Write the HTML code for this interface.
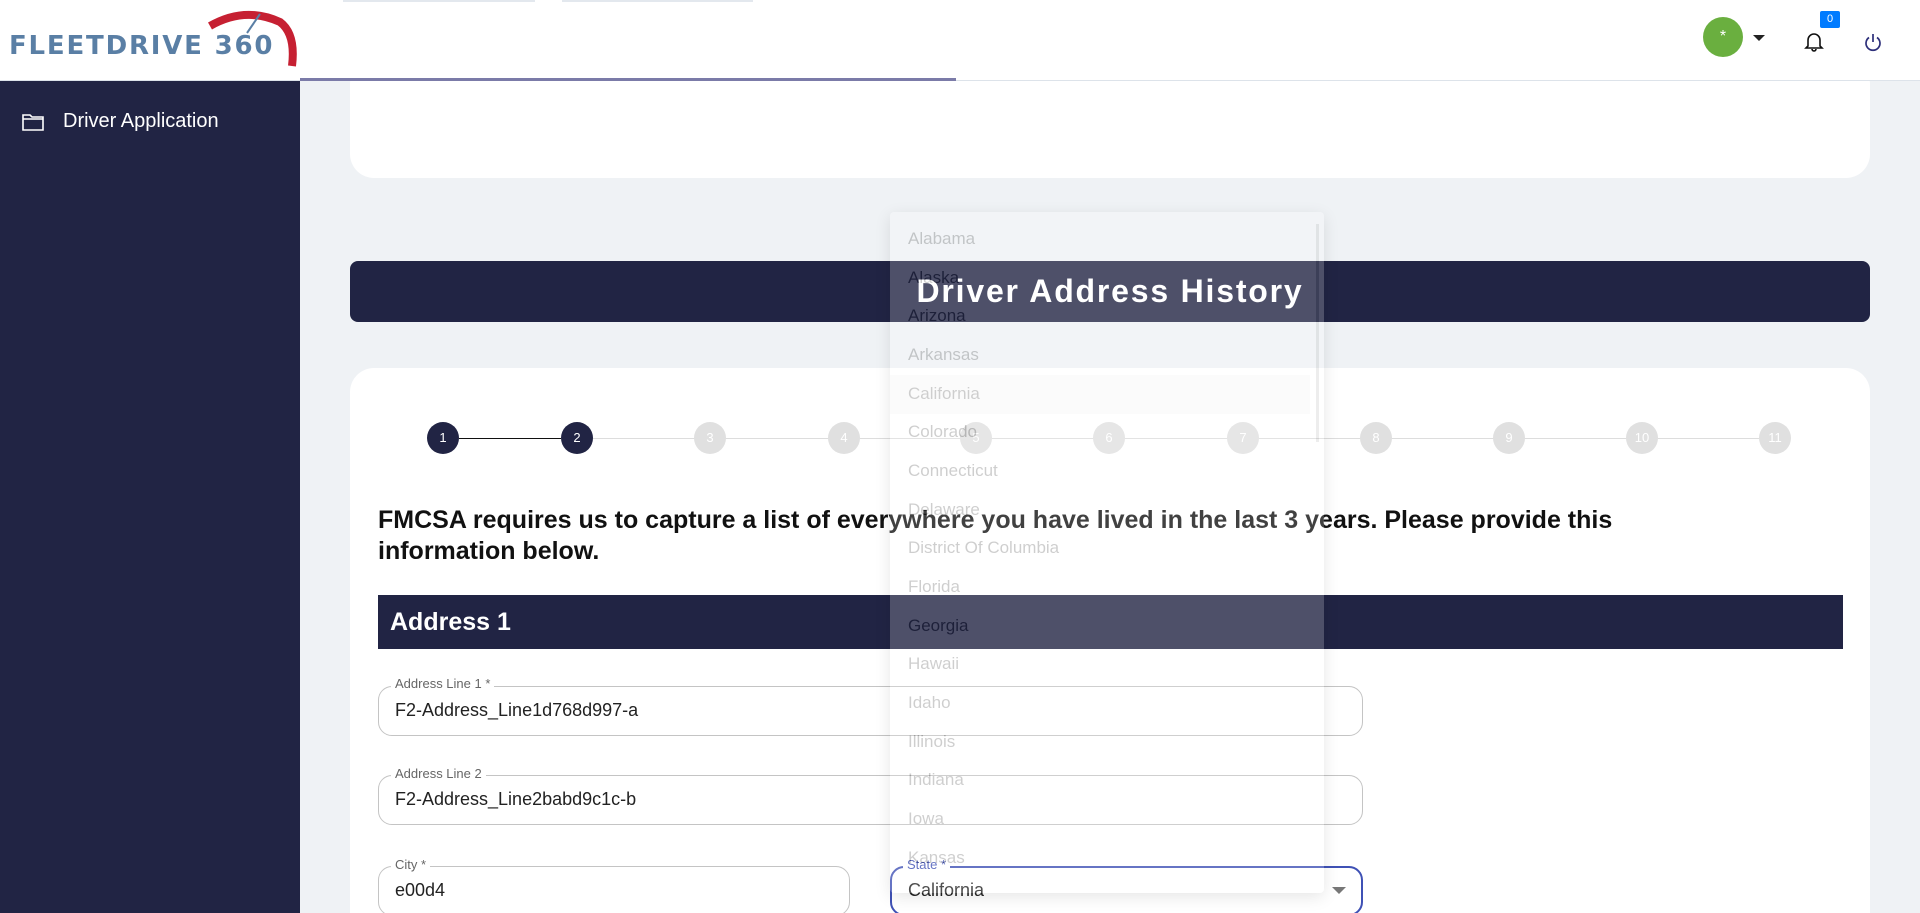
<!DOCTYPE html>
<html><head><meta charset="utf-8"><style>
*{box-sizing:border-box;margin:0;padding:0}
html,body{width:1920px;height:913px;overflow:hidden}
body{background:#eff2f5;font-family:"Liberation Sans",sans-serif;position:relative}
.abs{position:absolute}
.hdr{left:0;top:0;width:1920px;height:81px;background:#fff;border-bottom:1px solid #dde3ea}
.side{left:0;top:81px;width:300px;height:832px;background:#212444}
.card{background:#fff;border-radius:24px}
.step{width:32px;height:32px;border-radius:50%;background:#e0e0e0;color:#fff;font-size:13px;text-align:center;line-height:32px;top:422px}
.step.on{background:#212444}
.line{height:1px;background:#ddd;top:438px}
.fld{border:1px solid #c4c4c4;border-radius:14px;height:50px}
.lbl{font-size:13px;color:#666;background:#fff;padding:0 4px}
.val{font-size:18px;color:#222}
.dd{left:890px;top:212px;width:434px;height:681px;opacity:.2;background:#fff;border-radius:4px;box-shadow:0 4px 16px rgba(0,0,0,.5)}
.dd div{position:absolute;left:18px;font-size:17px;color:#111}
</style></head><body>
<div class="abs card" style="left:350px;top:60px;width:1520px;height:118px"></div>
<div class="abs hdr"></div>
<div class="abs" style="left:343px;top:0;width:192px;height:2px;background:#e3e8ee"></div>
<div class="abs" style="left:562px;top:0;width:191px;height:2px;background:#e3e8ee"></div>
<div class="abs" style="left:300px;top:78px;width:656px;height:3px;background:#7b7ba8"></div>
<!-- logo -->
<div class="abs" style="left:9px;top:31px;font-size:26px;font-weight:bold;color:#5a7fa5;letter-spacing:1.8px;font-family:'DejaVu Sans',sans-serif">FLEETDRIVE 360</div>
<svg class="abs" style="left:200px;top:8px" width="100" height="62" viewBox="0 0 100 62">
<path d="M10 18 Q45 -2 80 14 Q96 26 92 58" fill="none" stroke="#c62032" stroke-width="8"/>
<line x1="60" y1="6" x2="47" y2="25" stroke="#5a7fa5" stroke-width="2"/>
</svg>
<!-- header icons -->
<div class="abs" style="left:1703px;top:17px;width:40px;height:40px;border-radius:50%;background:#6aaf3f;color:#fff;text-align:center;line-height:40px;font-size:16px">*</div>
<div class="abs" style="left:1753px;top:35px;width:0;height:0;border-left:6px solid transparent;border-right:6px solid transparent;border-top:6px solid #222"></div>
<svg class="abs" style="left:1804px;top:31px" width="20" height="22" viewBox="0 0 20 22"><path d="M4 15V9a6 6 0 0 1 12 0v6l2 2H2z M8 18a2 2 0 0 0 4 0" fill="none" stroke="#111" stroke-width="1.6"/></svg>
<div class="abs" style="left:1820px;top:11px;width:20px;height:17px;background:#007bff;border-radius:2px;color:#fff;font-size:11px;text-align:center;line-height:17px">0</div>
<svg class="abs" style="left:1864px;top:33px" width="18" height="19" viewBox="0 0 18 19"><path d="M5 4.5A7 7 0 1 0 13 4.5 M9 1v8" fill="none" stroke="#2d2f7a" stroke-width="1.7"/></svg>
<!-- sidebar -->
<div class="abs side"></div>
<svg class="abs" style="left:22px;top:113px" width="22" height="18" viewBox="0 0 22 18"><path d="M1 2h7l2 2h11v13H1z M1 6h20" fill="none" stroke="#fff" stroke-width="1.6"/></svg>
<div class="abs" style="left:63px;top:110px;color:#fff;font-size:20px">Driver Application</div>
<!-- title -->
<div class="abs" style="left:350px;top:261px;width:1520px;height:61px;background:#212444;border-radius:8px;color:#fff;font-size:32px;font-weight:bold;text-align:center;line-height:61px;letter-spacing:1.8px">Driver Address History</div>
<!-- form card -->
<div class="abs card" style="left:350px;top:368px;width:1520px;height:545px;border-bottom-left-radius:0;border-bottom-right-radius:0"></div>
<div class="abs line" style="left:459px;width:102px;background:#111"></div>
<div class="abs line" style="left:593px;width:1166px"></div>
<div class="abs step on" style="left:427px">1</div>
<div class="abs step on" style="left:561px">2</div>
<div class="abs step" style="left:694px">3</div>
<div class="abs step" style="left:828px">4</div>
<div class="abs step" style="left:960px">5</div>
<div class="abs step" style="left:1093px">6</div>
<div class="abs step" style="left:1227px">7</div>
<div class="abs step" style="left:1360px">8</div>
<div class="abs step" style="left:1493px">9</div>
<div class="abs step" style="left:1626px">10</div>
<div class="abs step" style="left:1759px">11</div>
<div class="abs" style="left:378px;top:505px;width:1340px;font-size:25px;font-weight:bold;color:#111;line-height:31px">FMCSA requires us to capture a list of everywhere you have lived in the last 3 years. Please provide this information below.</div>
<div class="abs" style="left:378px;top:595px;width:1465px;height:54px;background:#212444;color:#fff;font-size:25px;font-weight:bold;line-height:54px;padding-left:12px">Address 1</div>
<div class="abs fld" style="left:378px;top:686px;width:985px"></div>
<div class="abs lbl" style="left:391px;top:676px">Address Line 1 *</div>
<div class="abs val" style="left:395px;top:700px">F2-Address_Line1d768d997-a</div>
<div class="abs fld" style="left:378px;top:775px;width:985px"></div>
<div class="abs lbl" style="left:391px;top:766px">Address Line 2</div>
<div class="abs val" style="left:395px;top:789px">F2-Address_Line2babd9c1c-b</div>
<div class="abs fld" style="left:378px;top:866px;width:472px"></div>
<div class="abs lbl" style="left:391px;top:857px">City *</div>
<div class="abs val" style="left:395px;top:880px">e00d4</div>
<div class="abs fld" style="left:890px;top:866px;width:473px;border:2px solid #3f51b5"></div>
<div class="abs lbl" style="left:903px;top:857px;color:#3f51b5">State *</div>
<div class="abs val" style="left:908px;top:880px">California</div>
<div class="abs" style="left:1332px;top:887px;border-left:7px solid transparent;border-right:7px solid transparent;border-top:7px solid #777"></div>
<!-- dropdown -->
<div class="abs dd">
<div style="left:0;top:163px;width:420px;height:39px;background:#eee;position:absolute"></div>
<div style="left:426px;top:12px;width:3px;height:218px;background:#aaa"></div>
<div style="top:17px">Alabama</div><div style="top:56px">Alaska</div><div style="top:94px">Arizona</div>
<div style="top:133px">Arkansas</div><div style="top:172px">California</div><div style="top:210px">Colorado</div>
<div style="top:249px">Connecticut</div><div style="top:288px">Delaware</div><div style="top:326px">District Of Columbia</div>
<div style="top:365px">Florida</div><div style="top:404px">Georgia</div><div style="top:442px">Hawaii</div>
<div style="top:481px">Idaho</div><div style="top:520px">Illinois</div><div style="top:558px">Indiana</div>
<div style="top:597px">Iowa</div><div style="top:636px">Kansas</div>
</div>
</body></html>
